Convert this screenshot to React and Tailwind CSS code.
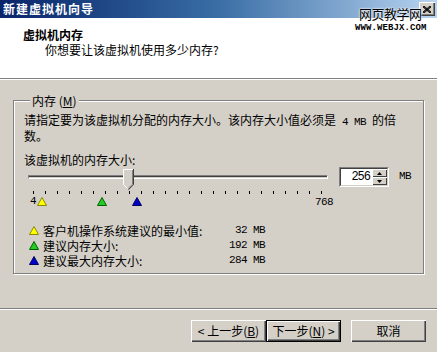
import React from "react";

const MIN = 4;
const MAX = 768;
const VALUE = 256;

// recommended sizes shown under the slider
const marks = [
  { label: "客户机操作系统建议的最小值:", value: 32, fill: "#ffff00", stroke: "#8a8a00" },
  { label: "建议内存大小:", value: 192, fill: "#22cc22", stroke: "#006000" },
  { label: "建议最大内存大小:", value: 284, fill: "#0000c8", stroke: "#000060" },
];

// px offset inside the slider box, first tick at 5, last at 293
const toX = (v) => 5 + ((v - MIN) / (MAX - MIN)) * 288;

function Tri({ fill, stroke }) {
  return (
    <svg width="10" height="9" viewBox="0 0 10 9" className="block">
      <polygon points="5,0.5 9.5,8.5 0.5,8.5" fill={fill} stroke={stroke} strokeWidth="1" />
    </svg>
  );
}

function Thumb() {
  return (
    <svg width="11" height="21" viewBox="0 0 11 21" className="block">
      <polygon points="0,0 11,0 11,15.5 5.5,21 0,15.5" fill="#d4d0c8" />
      <polyline points="0.5,15.5 0.5,0.5 10,0.5" fill="none" stroke="#fff" />
      <line x1="0.5" y1="15.5" x2="5" y2="20" stroke="#fff" />
      <polyline points="10.5,0 10.5,15.7 5.3,20.8" fill="none" stroke="#404040" />
      <polyline points="9.5,1 9.5,15.2 5,19.7" fill="none" stroke="#808080" />
    </svg>
  );
}

function Button({ children, primary }) {
  return (
    <button
      className={
        primary
          ? "w-[75px] h-[22px] border border-black bg-[#d4d0c8] text-[12px] leading-none text-black shadow-[inset_1px_1px_0_#fff,inset_-1px_-1px_0_#404040,inset_-2px_-2px_0_#808080]"
          : "w-[75px] h-[22px] bg-[#d4d0c8] text-[12px] leading-none text-black shadow-[inset_1px_1px_0_#fff,inset_-1px_-1px_0_#404040,inset_-2px_-2px_0_#808080]"
      }
    >
      {children}
    </button>
  );
}

export default function App() {
  const ticks = Array.from({ length: 25 }, (_, i) => 5 + i * 12);

  return (
    <div className="relative w-[437px] h-[352px] overflow-hidden bg-[#d4d0c8] text-black font-['Noto_Sans_CJK_SC','Liberation_Sans',sans-serif] text-[12px]">
      {/* TITLE BAR */}
      <div className="h-[18px] flex items-center pl-[3px] pr-[2px] bg-gradient-to-r from-[#0a246a] via-[#3a6ea5] to-[#b8d4f0]">
        <span className="text-white font-bold text-[12px] leading-none tracking-[1px]">新建虚拟机向导</span>
        <div className="ml-auto w-[16px] h-[14px] flex items-center justify-center bg-[#d4d0c8] shadow-[inset_1px_1px_0_#fff,inset_-1px_-1px_0_#404040,inset_-2px_-2px_0_#808080]">
          <svg width="8" height="7" viewBox="0 0 8 7">
            <path d="M0 0 L8 7 M1 0 L8 6 M0 1 L7 7 M8 0 L0 7 M7 0 L0 6 M8 1 L1 7" stroke="#000" strokeWidth="0.9" />
          </svg>
        </div>
      </div>

      {/* HEADER */}
      <div className="h-[61px] bg-white border-b border-[#808080] shadow-[0_1px_0_#fff] pt-[10px]">
        <div className="pl-[23px] font-bold leading-[14px]">虚拟机内存</div>
        <div className="pl-[45px] mt-[1px] leading-[14px]">你想要让该虚拟机使用多少内存?</div>
      </div>

      {/* WATERMARK */}
      <div className="absolute top-[6px] left-[359px] text-[13px] leading-[15px] tracking-[-0.5px] text-black [text-shadow:0_0_2px_#fff,0_0_2px_#fff]">
        网页教学网
      </div>
      <div className="absolute top-[23px] left-[355px] font-['Liberation_Mono',monospace] font-bold text-[9px] leading-[10px] tracking-[0.1px]">
        WWW.WEBJX.COM
      </div>

      {/* GROUP BOX */}
      <fieldset className="ml-[13px] mt-[15px] w-[411px] h-[180px] border border-[#808080] shadow-[inset_1px_1px_0_#fff,1px_1px_0_#fff] pl-[10px] pr-[6px]">
        <legend className="ml-[6px] px-[2px] leading-[13px] bg-[#d4d0c8]">
          内存 (<span className="underline">M</span>)
        </legend>

        <div className="mt-[6px] leading-[14px] whitespace-nowrap">
          请指定要为该虚拟机分配的内存大小。该内存大小值必须是
          <span className="font-['Liberation_Mono',monospace] text-[11px] tracking-[-0.6px]"> 4 MB </span>
          的倍
          <br />
          数。
        </div>

        <div className="mt-[10px] leading-[14px]">该虚拟机的内存大小:</div>

        {/* SLIDER ROW */}
        <div className="flex items-start">
          <div className="relative ml-[4px] w-[305px] h-[44px]">
            <div className="absolute left-0 top-[8px] w-[300px] h-[4px] border-t border-l border-[#808080] border-b-white border-r-white border-b border-r shadow-[inset_0_1px_0_#404040]" />
            {ticks.map((x) => (
              <div key={x} className="absolute top-[24px] w-px h-[3px] bg-black" style={{ left: x }} />
            ))}
            <div className="absolute top-[2px]" style={{ left: Math.round(toX(VALUE)) - 5 }}>
              <Thumb />
            </div>
            <span className="absolute left-[2px] top-[29px] font-['Liberation_Mono',monospace] text-[11px] leading-[11px]">4</span>
            <span className="absolute left-[287px] top-[30px] font-['Liberation_Mono',monospace] text-[11px] leading-[11px] tracking-[-0.6px]">768</span>
            {marks.map((m) => (
              <div key={m.value} className="absolute top-[30px]" style={{ left: Math.round(toX(m.value)) - 7 }}>
                <Tri fill={m.fill} stroke={m.stroke} />
              </div>
            ))}
          </div>

          <div className="ml-[6px] w-[50px] h-[20px] flex border border-t-[#808080] border-l-[#808080] border-b-white border-r-white">
            <div className="flex-1 flex bg-white border border-t-[#404040] border-l-[#404040] border-b-[#d4d0c8] border-r-[#d4d0c8]">
              <span className="flex-1 text-right pr-[2px] font-['Liberation_Mono',monospace] text-[12px] leading-[16px] tracking-[-1px]">256</span>
              <div className="w-[15px] flex flex-col">
                <div className="h-[8px] flex items-center justify-center bg-[#d4d0c8] shadow-[inset_1px_1px_0_#fff,inset_-1px_-1px_0_#404040]">
                  <svg width="5" height="3" viewBox="0 0 5 3"><polygon points="2.5,0 5,3 0,3" fill="#000" /></svg>
                </div>
                <div className="h-[8px] flex items-center justify-center bg-[#d4d0c8] shadow-[inset_1px_1px_0_#fff,inset_-1px_-1px_0_#404040]">
                  <svg width="5" height="3" viewBox="0 0 5 3"><polygon points="0,0 5,0 2.5,3" fill="#000" /></svg>
                </div>
              </div>
            </div>
          </div>
          <span className="ml-[10px] mt-[3px] font-['Liberation_Mono',monospace] text-[11px] leading-[12px] tracking-[-0.6px]">MB</span>
        </div>

        {/* LEGEND: icons, labels, values as three columns */}
        <div className="mt-[12px] w-[241px] flex">
          <div className="ml-[5px] flex flex-col">
            {marks.map((m) => (
              <div key={m.value} className="h-[15px] flex items-center">
                <Tri fill={m.fill} stroke={m.stroke} />
              </div>
            ))}
          </div>
          <div className="ml-[4px] leading-[15px] whitespace-nowrap">
            {marks[0].label}
            <br />
            {marks[1].label}
            <br />
            {marks[2].label}
          </div>
          <div className="ml-auto text-right font-['Liberation_Mono',monospace] text-[11px] tracking-[-0.6px] leading-[15px] whitespace-nowrap">
            {marks[0].value} MB
            <br />
            {marks[1].value} MB
            <br />
            {marks[2].value} MB
          </div>
        </div>
      </fieldset>

      {/* SEPARATOR */}
      <div className="mt-[34px] h-px bg-[#808080] shadow-[0_1px_0_#fff]" />

      {/* BUTTONS */}
      <div className="mt-[11px] flex justify-end pr-[11px]">
        <Button>
          &lt; 上一步(<span className="underline">B</span>)
        </Button>
        <Button primary>
          下一步(<span className="underline">N</span>) &gt;
        </Button>
        <div className="ml-[10px]">
          <Button>取消</Button>
        </div>
      </div>
    </div>
  );
}
